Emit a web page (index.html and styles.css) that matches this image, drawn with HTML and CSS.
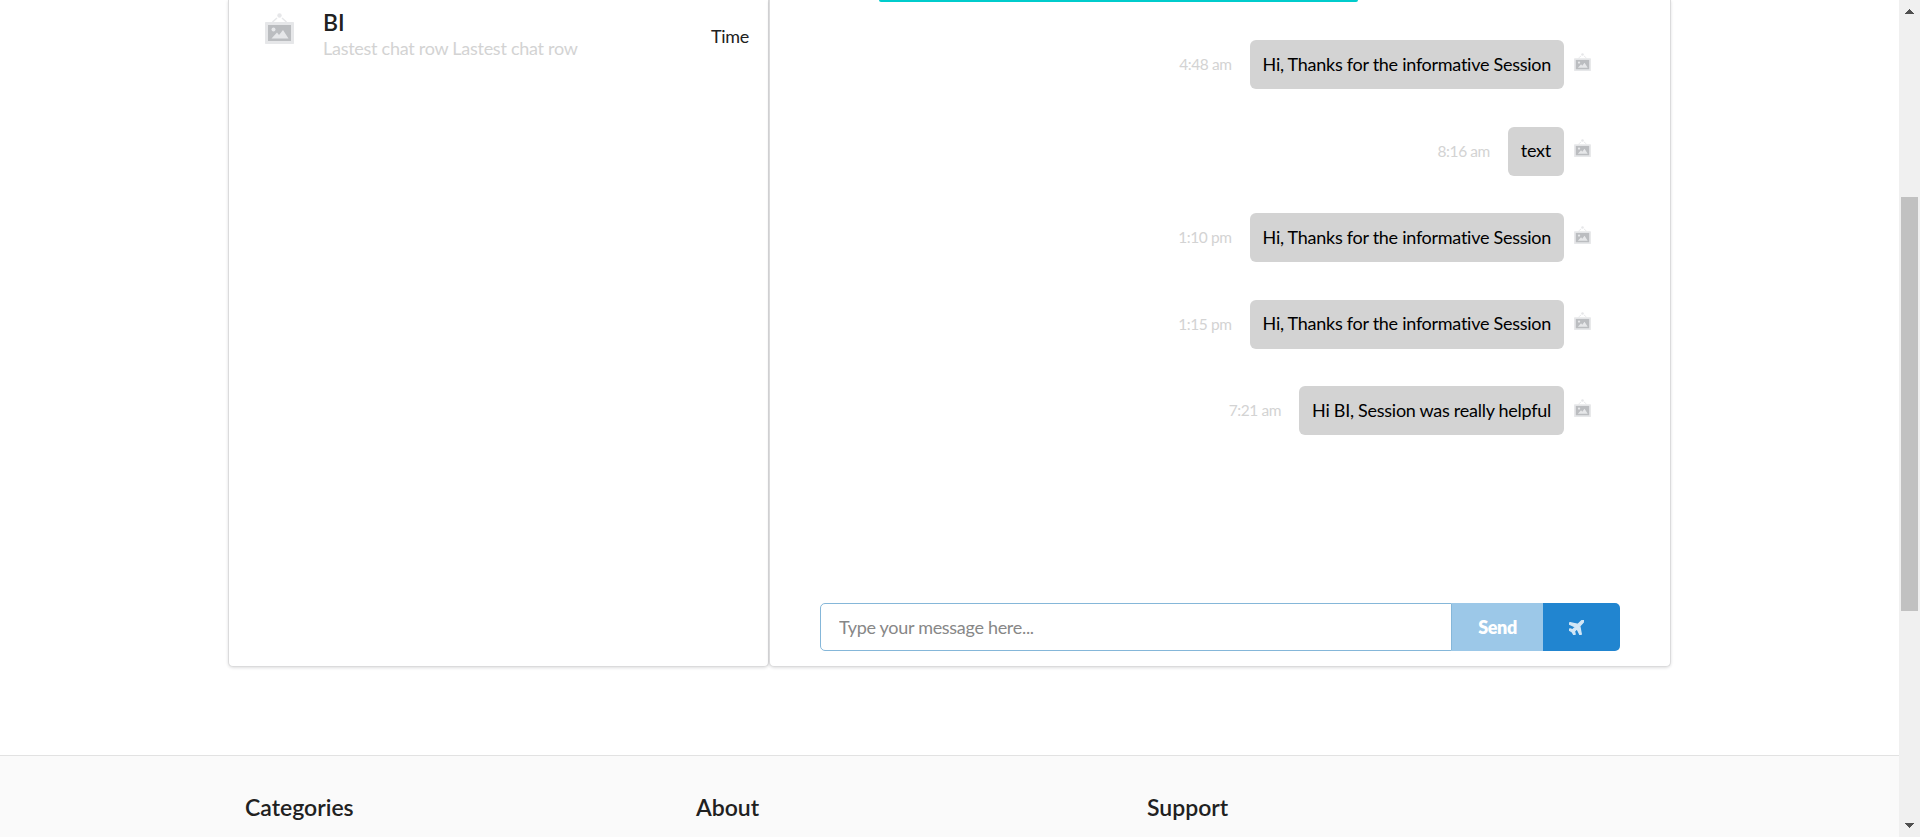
FILE: index.html
```
<!DOCTYPE html>
<html lang="en">
<head>
<meta charset="utf-8">
<title>Messages</title>
<link rel="stylesheet" href="styles.css">
</head>
<body>
<svg class="defs" aria-hidden="true">
  <symbol id="picture" viewBox="0 0 29 31">
    <path d="M7.5 9L12 5M21.500 9L17 5" fill="none" stroke="#e6e7e9" stroke-width="1.5"/>
    <circle cx="14.500" cy="2.500" r="2.200" fill="#e6e7e9"/>
    <rect x="0" y="9" width="29" height="22" rx="0.700" fill="#e6e7e9"/>
    <rect x="3" y="12" width="23" height="16" fill="#bbbdc0"/>
    <circle cx="8.500" cy="16.500" r="2" fill="#e6e7e9"/>
    <path d="M6.500 25.500L12 19.500L14 22L18 17L23.500 25.500Z" fill="#e6e7e9"/>
  </symbol>
</svg>
<div class="window">
  <div class="page">
    <main class="chat">
      <section class="card contacts">
        <div class="contact">
          <svg class="contact-avatar"><use href="#picture"/></svg>
          <div class="contact-body">
            <h3 class="contact-name">BI</h3>
            <p class="contact-last">Lastest chat row Lastest chat row</p>
          </div>
          <span class="contact-time">Time</span>
        </div>
      </section>
      <section class="card conversation">
        <div class="received"></div>
        <div class="messages">
          <div class="message"><span class="time">4:48 am</span><p class="bubble">Hi, Thanks for the informative Session</p><svg class="avatar"><use href="#picture"/></svg></div>
          <div class="message"><span class="time">8:16 am</span><p class="bubble">text</p><svg class="avatar"><use href="#picture"/></svg></div>
          <div class="message"><span class="time">1:10 pm</span><p class="bubble">Hi, Thanks for the informative Session</p><svg class="avatar"><use href="#picture"/></svg></div>
          <div class="message"><span class="time">1:15 pm</span><p class="bubble">Hi, Thanks for the informative Session</p><svg class="avatar"><use href="#picture"/></svg></div>
          <div class="message"><span class="time">7:21 am</span><p class="bubble">Hi BI, Session was really helpful</p><svg class="avatar"><use href="#picture"/></svg></div>
        </div>
        <form class="composer">
          <input class="field" type="text" placeholder="Type your message here...">
          <button class="send" type="button"><span>Send</span></button>
          <button class="fly" type="button" aria-label="Send message">
            <svg class="plane" viewBox="0 0 1408 1408"><path transform="translate(0 1408) scale(1 -1)" d="M1397 1324q0 -87 -149 -236l-240 -240l143 -746l1 -6q0 -14 -9 -23l-64 -64q-9 -9 -23 -9q-21 0 -29 18l-274 575l-245 -245q68 -238 68 -252t-9 -23l-64 -64q-9 -9 -23 -9q-18 0 -28 16l-155 280l-280 155q-17 9 -17 28q0 14 9 23l64 65q9 9 23 9t252 -68l245 245l-575 274q-18 8 -18 29q0 14 9 23l64 64q9 9 23 9q4 0 6 -1l746 -143l240 240q149 149 236 149q32 0 52.500 -20.500t20.500 -52.500z"/></svg>
          </button>
        </form>
      </section>
    </main>
    <footer class="footer">
      <h4>Categories</h4>
      <h4>About</h4>
      <h4>Support</h4>
    </footer>
  </div>
  <div class="scrollbar">
    <svg class="arrow" viewBox="0 0 9 5" shape-rendering="crispEdges"><path d="M4 0H5V1H6V2H7V3H8V4H9V5H0V4H1V3H2V2H3V1H4Z"/></svg>
    <div class="thumb"></div>
    <svg class="arrow down" viewBox="0 0 9 5" shape-rendering="crispEdges"><path d="M0 0H9V1H8V2H7V3H6V4H5V5H4V4H3V3H2V2H1V1H0Z"/></svg>
  </div>
</div>
</body>
</html>
```
FILE: styles.css
```
* { box-sizing: border-box; }
body { margin: 0; background: #fff; font: 18px/26px Lato, sans-serif; letter-spacing: -.27px; font-variant-ligatures: none; color: #212121; }
h3, h4, p { margin: 0; }
.defs { display: block; width: 0; height: 0; }
.window { display: flex; height: 837px; overflow: hidden; }
.page { flex: 1; display: flex; flex-direction: column; }
.chat { display: flex; height: 667px; padding-left: 228px; }
.card { border: 1px solid #dbdbdc; border-top: 0; border-radius: 0 0 5px 5px; box-shadow: 0 1px 3px rgba(34,36,38,.15); background: #fff; }
.contacts { width: 541px; }
.contact { display: flex; padding: 8px 19px 0 36px; }
.contact-avatar { width: 29px; height: 31px; margin-top: 5px; }
.contact-body { flex: 1; padding-left: 29px; }
.contact-name { font-size: 23px; line-height: 28px; font-weight: 600; letter-spacing: 0; }
.contact-last { line-height: 24px; color: #d3d3d3; }
.contact-time { padding-top: 15px; }
.conversation { width: 902px; display: flex; flex-direction: column; }
.received { width: 479px; height: 2px; margin-left: 109px; background: #0cc; border-radius: 0 0 5px 5px; }
.messages { flex: 1; display: flex; flex-direction: column; gap: 37.500px; padding: 38px 79px 0 0; }
.message { display: flex; justify-content: flex-end; align-items: flex-start; }
.time { padding: 11.400px 18px 0 0; font-size: 15.500px; letter-spacing: -.42px; color: #d3d3d3; }
.bubble { height: 49px; padding: 10.600px 13px 11px; border-radius: 6px; background: #d3d3d3; color: #000; }
.avatar { width: 17px; height: 18px; margin: 12.900px 0 0 10px; }
.composer { display: flex; height: 48px; margin: 0 50px 15px; }
.field { flex: 1; min-width: 0; border: 1px solid #85b7d9; border-radius: 5px 0 0 5px; padding: 0 18px; font: 18px Lato, sans-serif; letter-spacing: -.3px; outline: none; }
.field::placeholder { color: #878787; }
.send { width: 91px; border: 0; padding: 0; background: #9cc8e8; color: #fff; font: 800 18px Lato, sans-serif; letter-spacing: -.4px; }
.fly { width: 77px; border: 0; border-radius: 0 5px 5px 0; padding: 0 0 0 26px; background: #2185d0; display: flex; align-items: center; }
.plane { width: 15px; height: 15px; fill: #d3e7f6; stroke: #d3e7f6; stroke-width: 120; }
.footer { flex: 1; display: flex; margin-top: 88px; padding: 36px 0 0 245px; background: #fafafa; border-top: 1px solid #e2e2e2; }
.footer h4 { width: 451px; font-size: 23px; line-height: 30px; font-weight: 600; letter-spacing: 0; }
.scrollbar { width: 21px; background: #f0f0f0; display: flex; flex-direction: column; align-items: center; padding: 9px 0; }
.arrow { width: 9px; height: 5px; fill: #505050; }
.thumb { width: 17px; height: 414px; margin-top: 183px; background: #c1c1c1; }
.down { margin-top: auto; }
```
